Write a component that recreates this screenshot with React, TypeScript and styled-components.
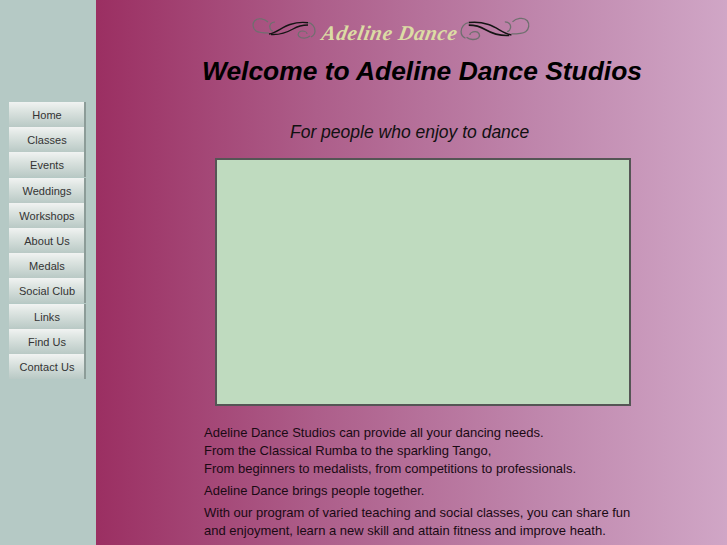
import React from 'react';
import styled, { createGlobalStyle } from 'styled-components';

const GlobalStyle = createGlobalStyle`
  html, body {
    margin: 0;
    padding: 0;
    height: 545px;
    overflow: hidden;
    font-family: 'Liberation Sans', Arial, sans-serif;
  }
`;

const Page = styled.div`
  display: flex;
  width: 727px;
  height: 545px;
  overflow: hidden;
`;

const Sidebar = styled.nav`
  width: 96px;
  flex-shrink: 0;
  box-sizing: border-box;
  padding: 102px 10px 0 9px;
  background: #b5c9c5;
  display: flex;
  flex-direction: column;
  gap: 0.2px;
`;

const NavButton = styled.a`
  display: flex;
  align-items: center;
  justify-content: center;
  height: 25px;
  box-sizing: border-box;
  padding: 1px 0 0 1px;
  font-size: 11px;
  letter-spacing: 0.05px;
  color: #333;
  background: linear-gradient(to bottom, #f1f3f2 0%, #dfe6e3 30%, #b9c9c5 100%);
  border-right: 2px solid #8c9c98;
`;

const Main = styled.main`
  flex: 1;
  box-sizing: border-box;
  padding: 14px 0 0 108px;
  background: linear-gradient(to right, #9b2f62 0%, #ad5e8a 35%, #bf86ac 70%, #d0a6c6 100%);
  overflow: hidden;
`;

const Logo = styled.div`
  display: flex;
  align-items: center;
  width: 290px;
  height: 30px;
  margin-left: 48px;
`;

const LogoText = styled.span`
  font-family: 'Liberation Serif', serif;
  font-style: italic;
  font-weight: bold;
  font-size: 21px;
  letter-spacing: 0.6px;
  white-space: nowrap;
  color: #dcdca4;
  transform: skewX(-10deg);
  margin: 9px 2px 0 6px;
`;

const Heading = styled.h1`
  margin: 12px 0 0 -2px;
  font-size: 26.4px;
  line-height: 30px;
  font-style: italic;
  font-weight: bold;
  white-space: nowrap;
  color: #000;
`;

const Tagline = styled.h2`
  margin: 36px 0 0 86px;
  font-size: 17.5px;
  line-height: 20px;
  font-style: italic;
  font-weight: normal;
  white-space: nowrap;
  color: #111;
`;

const Panel = styled.div`
  width: 416px;
  height: 248px;
  box-sizing: border-box;
  margin: 16px 0 0 11px;
  background: #bfdbbf;
  border: 2px solid #555;
`;

const Copy = styled.p<{ $top: number }>`
  margin: ${(props) => props.$top}px 0 0 0;
  width: 440px;
  font-size: 13px;
  line-height: 18px;
  color: #1a0a14;
`;

const items = ['Home', 'Classes', 'Events', 'Weddings', 'Workshops', 'About Us', 'Medals', 'Social Club', 'Links', 'Find Us', 'Contact Us'];

const Flourish = ({ flip, width, height }: { flip?: boolean; width: number; height: number }) => (
  <svg
    width={width}
    height={height}
    viewBox="0 0 64 22"
    fill="none"
    style={flip ? { transform: 'scaleX(-1)', flexShrink: 0 } : { flexShrink: 0 }}
  >
    <path d="M16 4 C13 1 6 -1 2.5 3 C0 6 1 11 4 13 C7 15 12 15 17 15" stroke="#6f6f6f" strokeWidth="1.2" />
    <path d="M23 4 C19 4 17 7 18 10 C18.5 12 20 13 21 13" stroke="#6f6f6f" strokeWidth="1.2" />
    <path d="M17 16 C24 15 30 9 38 6.5 C44 4.5 51 4 56 4.7" stroke="#141414" strokeWidth="1.4" />
    <path d="M19 16.5 C27 17 34 15 41 11 C46 8 51 7 56 7" stroke="#141414" strokeWidth="1.4" />
    <path d="M56 4.7 C60 5 63 9 63 13 C63 16 61 18 59 19" stroke="#6f6f6f" strokeWidth="1.2" />
    <path d="M58 18 C55 20.5 50 21 47 18.5 C45 16 47 13 50 13 C53 13 55 14.5 55 16" stroke="#6f6f6f" strokeWidth="1.2" />
  </svg>
);

const App = () => (
  <Page>
    <GlobalStyle />
    <Sidebar>
      {items.map((item) => (
        <NavButton key={item}>{item}</NavButton>
      ))}
    </Sidebar>
    <Main>
      <Logo>
        <Flourish width={64} height={22} />
        <LogoText>Adeline Dance</LogoText>
        <Flourish flip width={70} height={25} />
      </Logo>
      <Heading>Welcome to Adeline Dance Studios</Heading>
      <Tagline>For people who enjoy to dance</Tagline>
      <Panel />
      <Copy $top={18}>
        Adeline Dance Studios can provide all your dancing needs.
        <br />
        From the Classical Rumba to the sparkling Tango,
        <br />
        From beginners to medalists, from competitions to professionals.
      </Copy>
      <Copy $top={4}>Adeline Dance brings people together.</Copy>
      <Copy $top={4}>
        With our program of varied teaching and social classes, you can share fun and enjoyment, learn a new skill and attain fitness and improve heath.
      </Copy>
    </Main>
  </Page>
);

export default App;
